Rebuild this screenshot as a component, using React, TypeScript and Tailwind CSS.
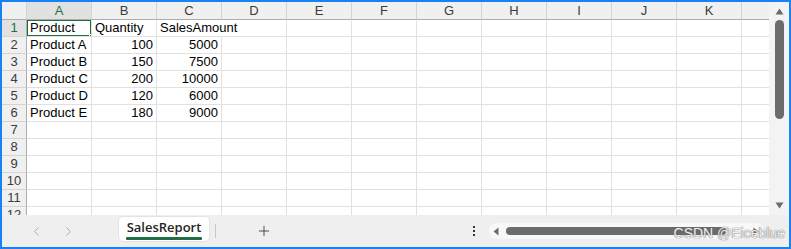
import { ChevronLeft, ChevronRight, Plus } from "lucide-react";

const columns = ["A", "B", "C", "D", "E", "F", "G", "H", "I", "J", "K", "L"];

const rows: (string | number)[][] = [
  ["Product", "Quantity", "SalesAmount"],
  ["Product A", 100, 5000],
  ["Product B", 150, 7500],
  ["Product C", 200, 10000],
  ["Product D", 120, 6000],
  ["Product E", 180, 9000],
];

const TOTAL_ROWS = 12;

const SheetGrid = () => {
  return (
    <div className="flex-1 overflow-hidden bg-white">
      <div className="grid grid-cols-[25px_repeat(12,65px)] grid-rows-[18px_repeat(12,17px)] text-[13px] leading-[16px] text-black">
        {/* corner */}
        <div className="bg-[#f0f0f0] border-r border-b border-r-[#d4d4d4] border-b-[#acacac]" />
        {columns.map((col, i) => (
          <div
            key={col}
            className={
              i === 0
                ? "flex items-center justify-center bg-[#e1e1e1] border-r border-b border-r-[#d4d4d4] border-b-[#acacac] text-[#1e6f43]"
                : "flex items-center justify-center bg-[#f0f0f0] border-r border-b border-r-[#d4d4d4] border-b-[#acacac] text-[#3b3b3b]"
            }
          >
            {/* last column sits under the scrollbar, its letter is not visible */}
            {col === "L" ? "" : col}
          </div>
        ))}

        {Array.from({ length: TOTAL_ROWS }).map((_, r) => {
          const row = rows[r] || [];
          return [
            <div
              key={`h${r}`}
              className={
                r === 0
                  ? "flex items-center justify-center bg-[#e1e1e1] border-r border-b border-r-[#acacac] border-b-[#d4d4d4] text-[#1e6f43]"
                  : "flex items-center justify-center bg-[#f0f0f0] border-r border-b border-r-[#acacac] border-b-[#d4d4d4] text-[#3b3b3b]"
              }
            >
              {r + 1}
            </div>,
            ...columns.map((col, c) => {
              const value = row[c];
              const isNumber = typeof value === "number";
              const overflows = r === 0 && c === 2;
              return (
                <div
                  key={`${r}-${col}`}
                  className={
                    "relative flex items-center whitespace-nowrap border-b border-[#e1e1e1] px-[3px] " +
                    (overflows ? "border-r border-r-transparent z-10 overflow-visible " : "border-r overflow-hidden ") +
                    (isNumber ? "justify-end" : "justify-start")
                  }
                >
                  {value !== undefined ? value : ""}
                  {r === 0 && c === 0 && (
                    <div className="absolute -left-px -top-px w-[66px] h-[18px] border-2 border-[#1e6f43] pointer-events-none">
                      <div className="absolute -right-[4px] -bottom-[4px] w-[5px] h-[5px] bg-[#1e6f43] border border-white" />
                    </div>
                  )}
                </div>
              );
            }),
          ];
        })}
      </div>
    </div>
  );
};

const VerticalScrollbar = () => (
  <div className="w-[20px] bg-[#f3f3f3] flex flex-col items-center py-[5px]">
    <svg width="9" height="7" viewBox="0 0 9 7" className="mt-[1px]">
      <polygon points="4.5,0.5 8.5,6.5 0.5,6.5" fill="#6b6b6b" />
    </svg>
    <div className="mt-[5px] w-[9px] h-[99px] rounded-full bg-[#6b6b6b]" />
    <div className="flex-1" />
    <svg width="9" height="7" viewBox="0 0 9 7" className="mb-[1px]">
      <polygon points="0.5,0.5 8.5,0.5 4.5,6.5" fill="#6b6b6b" />
    </svg>
  </div>
);

const TabBar = () => (
  <div className="relative h-[32px] bg-[#efefef] flex items-center">
    <div className="w-[116px] flex items-center pl-[27px] gap-[17px] text-[#9c9c9c]">
      <ChevronLeft size={15} strokeWidth={1.3} />
      <ChevronRight size={15} strokeWidth={1.3} />
    </div>
    <div className="self-start mt-[1px] h-[26px] w-[92px] bg-white rounded-[5px] border border-[#e3e3e3] flex flex-col items-center justify-center">
      <span className="font-['Open_Sans',sans-serif] text-[13px] font-semibold leading-[16px] text-[#262626] mt-[1px]">
        SalesReport
      </span>
      <div className="mt-[2px] w-[76px] h-[3px] bg-[#1e6f43] rounded-[1px]" />
    </div>
    <div className="ml-[5px] w-px h-[14px] bg-[#c8c8c8]" />
    <div className="ml-[40px] text-[#333]">
      <Plus size={16} strokeWidth={1.3} />
    </div>
    <div className="ml-[201px] flex flex-col gap-[2px]">
      <div className="w-[2px] h-[2px] bg-[#333]" />
      <div className="w-[2px] h-[2px] bg-[#333]" />
      <div className="w-[2px] h-[2px] bg-[#333]" />
    </div>
    <div className="ml-[14px] w-[275px] h-[16px] rounded-full bg-[#f8f8f8] flex items-center pl-[4px] pr-[5px]">
      <svg width="6" height="9" viewBox="0 0 6 9">
        <polygon points="0.5,4.5 5.5,0.5 5.5,8.5" fill="#6b6b6b" />
      </svg>
      <div className="ml-[7px] w-[220px] h-[8px] rounded-full bg-[#6b6b6b]" />
      <div className="flex-1" />
      <svg width="6" height="9" viewBox="0 0 6 9">
        <polygon points="0.5,0.5 5.5,4.5 0.5,8.5" fill="#6b6b6b" />
      </svg>
    </div>
    {/* watermark */}
    <span className="absolute right-[4px] top-[10px] font-['Liberation_Sans',sans-serif] text-[14px] leading-[16px] text-white/90 [text-shadow:0_0_1px_#666,0_0_1px_#666]">
      CSDN @Eiceblue
    </span>
  </div>
);

export default function App() {
  return (
    <div className="w-[791px] h-[249px] border-2 border-[#1683f5] flex flex-col font-['Liberation_Sans',Arial,sans-serif] bg-white overflow-hidden">
      <div className="h-[213px] flex">
        <SheetGrid />
        <VerticalScrollbar />
      </div>
      <TabBar />
    </div>
  );
}
